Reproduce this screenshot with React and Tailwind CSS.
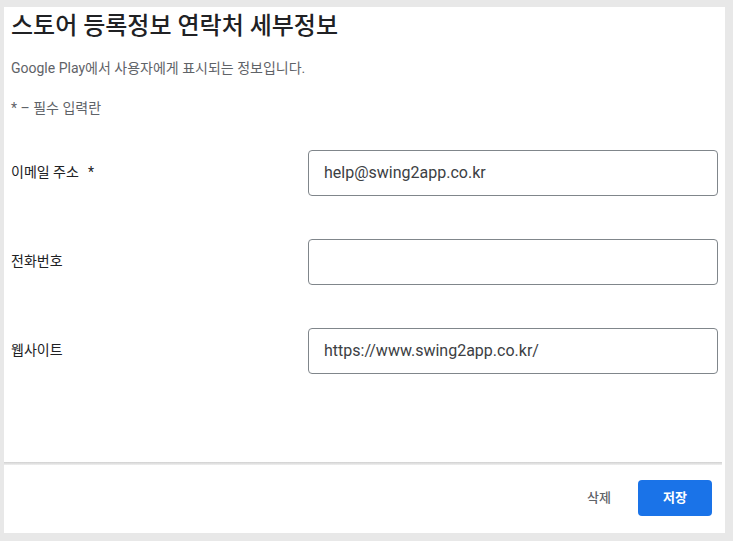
const font = "font-['Roboto','Noto_Sans_CJK_KR',sans-serif]";

function Field({ label, required, value }) {
  return (
    <div className="flex items-center h-[89px]">
      <div className="w-[297px] text-[14px] text-[#202124]">
        {label}
        {required && <span className="ml-[9px]">*</span>}
      </div>
      <input
        type="text"
        defaultValue={value}
        className="w-[410px] h-[46px] border border-[#80868b] rounded-[4px] px-[15px] text-[16px] text-[#3c4043] outline-none"
      />
    </div>
  );
}

export default function App() {
  return (
    <div className={`${font} h-[541px] w-[733px] bg-[#e8e8e8] pl-[4px] pt-[7px] pr-[8px] pb-[8px]`}>
      <div className="h-full bg-white flex flex-col">
        <div className="flex-1 pl-[7px] pr-[3px]">
          <h1 className="text-[24px] font-medium text-[#202124] leading-[30px] pt-[4px]">
            스토어 등록정보 연락처 세부정보
          </h1>
          <p className="text-[14px] leading-[20px] text-[#5f6368] mt-[17px]">
            Google Play에서 사용자에게 표시되는 정보입니다.
          </p>
          <p className="text-[14px] leading-[20px] text-[#5f6368] mt-[20px]">* – 필수 입력란</p>
          <div className="mt-[10px]">
            <Field label="이메일 주소" required value="help@swing2app.co.kr" />
            <Field label="전화번호" value="" />
            <Field label="웹사이트" value="https://www.swing2app.co.kr/" />
          </div>
        </div>
        <div className="h-[3px] mr-[3px] bg-gradient-to-b from-[#d0d0d0] to-[#f0f0f0]" />
        <div className="h-[68px] flex items-center justify-end gap-[27px] pr-[13px] pb-[2px]">
          <button className="text-[13px] font-medium text-[#5f6368]">삭제</button>
          <button className="w-[74px] h-[36px] rounded-[4px] bg-[#1a73e8] text-white text-[13px] font-bold">
            저장
          </button>
        </div>
      </div>
    </div>
  );
}
